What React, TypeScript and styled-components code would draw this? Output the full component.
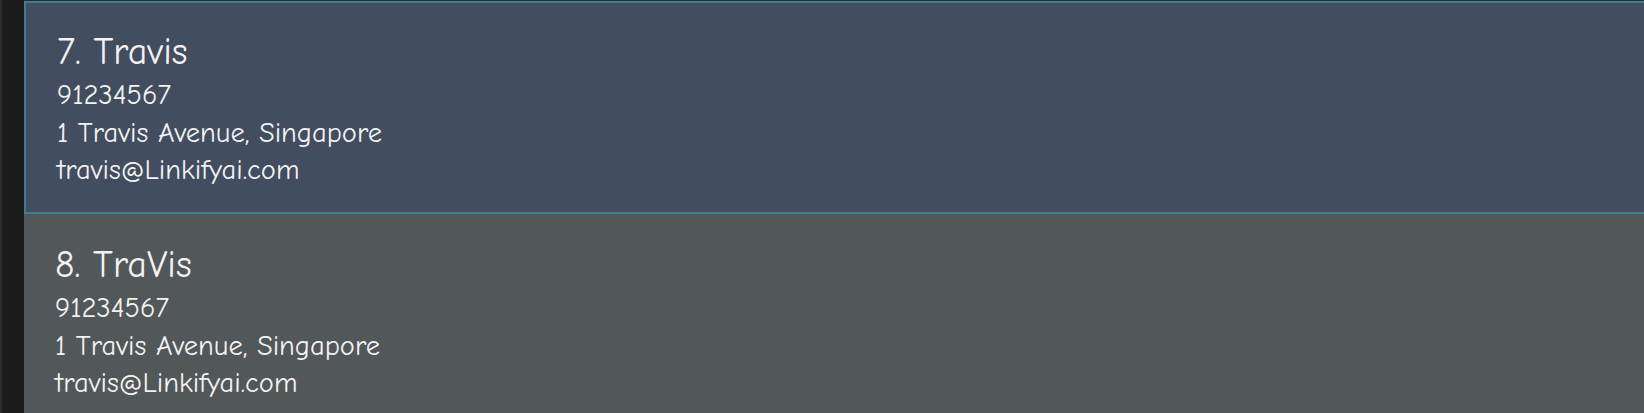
import React from "react";
import styled, { createGlobalStyle } from "styled-components";

const Global = createGlobalStyle`
  html, body { margin: 0; padding: 0; background: #1c1c1c; }
  body { width: 1644px; height: 413px; overflow: hidden; }
`;

const Page = styled.div`
  display: flex;
  width: 1644px;
  height: 413px;
  overflow: hidden;
  background: #1c1c1c;
`;

const Gutter = styled.div`
  flex: 0 0 22px;
  border-left: 2px solid #2b2b2b;
  background: #1c1c1c;
`;

const List = styled.div`
  flex: 1 1 auto;
  display: flex;
  flex-direction: column;
  padding-top: 1px;
  background: #2a2f33;
  min-width: 0;
`;

const Card = styled.div<{ $selected?: boolean }>`
  box-sizing: border-box;
  width: 1640px;
  flex: 0 0 auto;
  height: ${(p) => (p.$selected ? "213px" : "220px")};
  padding: ${(p) => (p.$selected ? "29px 0 0 31px" : "31px 0 0 31px")};
  border: ${(p) => (p.$selected ? "2px solid #3d7f8f" : "none")};
  background: ${(p) => (p.$selected ? "#424d5f" : "#525759")};
  color: #f2f2f2;
  font-family: "Comic Sans MS", "Comic Neue", "Open Sans", sans-serif;
`;

const Name = styled.div`
  font-size: 38px;
  line-height: 40px;
  margin-bottom: 4px;
  white-space: nowrap;
`;

const Detail = styled.div`
  font-size: 28.5px;
  line-height: 37.5px;
  white-space: nowrap;
`;

type Person = { idx: number; name: string; phone: string; address: string; email: string };

const people: Person[] = [
  { idx: 7, name: "Travis", phone: "91234567", address: "1 Travis Avenue, Singapore", email: "travis@Linkifyai.com" },
  { idx: 8, name: "TraVis", phone: "91234567", address: "1 Travis Avenue, Singapore", email: "travis@Linkifyai.com" },
];

export default function App() {
  return (
    <Page>
      <Global />
      <Gutter />
      <List>
        {people.map((p, i) => (
          <Card key={p.idx} $selected={i === 0}>
            <Name>{p.idx}. {p.name}</Name>
            <Detail>{p.phone}</Detail>
            <Detail>{p.address}</Detail>
            <Detail>{p.email}</Detail>
          </Card>
        ))}
      </List>
    </Page>
  );
}
